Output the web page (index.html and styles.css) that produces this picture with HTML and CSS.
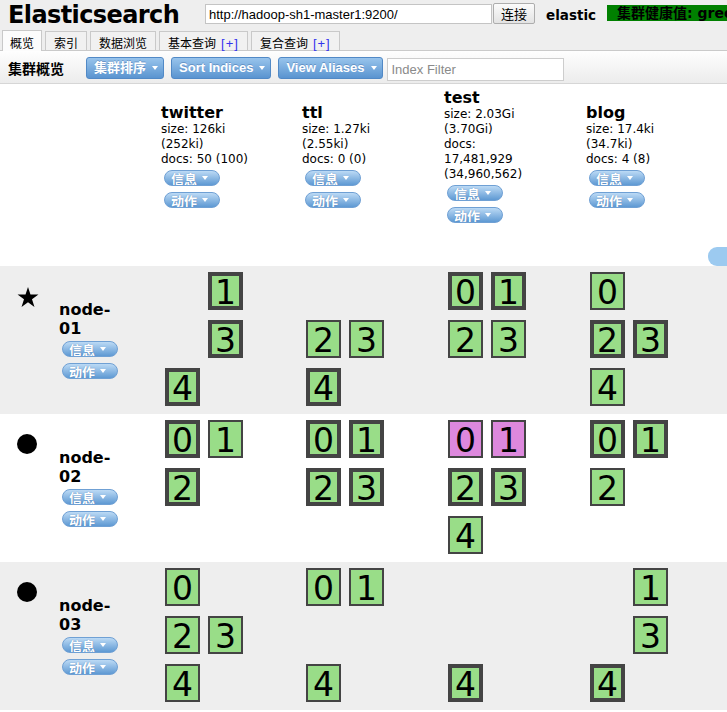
FILE: index.html
```html
<!DOCTYPE html>
<html lang="zh">
<head>
<meta charset="utf-8">
<title>Elasticsearch</title>
<link rel="stylesheet" href="styles.css">
</head>
<body>
<div class="page">
  <div class="top">
    <div class="header">
      <div class="title">Elasticsearch</div>
      <input class="url" type="text" value="http://hadoop-sh1-master1:9200/">
      <button class="connect">连接</button>
      <div class="cluster-name">elastic</div>
      <div class="health">集群健康值: green (40 of 40)</div>
    </div>
    <div class="tabs">
      <div class="tab active">概览</div>
      <div class="tab">索引</div>
      <div class="tab">数据浏览</div>
      <div class="tab">基本查询<span class="plus">[+]</span></div>
      <div class="tab">复合查询<span class="plus">[+]</span></div>
    </div>
  </div>
  <div class="toolbar">
    <div class="toolbar-title">集群概览</div>
    <div class="tbtn">集群排序<span class="caret"></span></div>
    <div class="tbtn">Sort Indices<span class="caret"></span></div>
    <div class="tbtn last">View Aliases<span class="caret"></span></div>
    <input class="filter" type="text" placeholder="Index Filter">
  </div>

  <div class="overview">
    <div class="grid-row head-row">
      <div></div>
      <div class="index-head">
        <div class="index-name">twitter</div>
        <div class="index-info">size: 126ki (252ki)<br>docs: 50 (100)</div>
        <div class="pills"><div class="pill"><span class="pill-text">信息</span><span class="caret"></span></div><div class="pill"><span class="pill-text">动作</span><span class="caret"></span></div></div>
      </div>
      <div class="index-head">
        <div class="index-name">ttl</div>
        <div class="index-info">size: 1.27ki (2.55ki)<br>docs: 0 (0)</div>
        <div class="pills"><div class="pill"><span class="pill-text">信息</span><span class="caret"></span></div><div class="pill"><span class="pill-text">动作</span><span class="caret"></span></div></div>
      </div>
      <div class="index-head">
        <div class="index-name">test</div>
        <div class="index-info">size: 2.03Gi (3.70Gi)<br>docs: 17,481,929 (34,960,562)</div>
        <div class="pills"><div class="pill"><span class="pill-text">信息</span><span class="caret"></span></div><div class="pill"><span class="pill-text">动作</span><span class="caret"></span></div></div>
      </div>
      <div class="index-head">
        <div class="index-name">blog</div>
        <div class="index-info">size: 17.4ki (34.7ki)<br>docs: 4 (8)</div>
        <div class="pills"><div class="pill"><span class="pill-text">信息</span><span class="caret"></span></div><div class="pill"><span class="pill-text">动作</span><span class="caret"></span></div></div>
      </div>
    </div>
    <div class="alias-row"><div class="alias"></div></div>

    <div class="grid-row node-row alt">
      <div class="node-cell">
        <div class="node-icon"><svg class="star" width="22" height="20" viewBox="0 0 22 20"><polygon points="11,0 13.47,7.6 21.46,7.6 15,12.3 17.47,19.9 11,15.2 4.53,19.9 7,12.3 0.54,7.6 8.53,7.6" fill="#000"/></svg></div>
        <div class="node-info">
          <div class="node-name">node-<wbr>01</div>
          <div class="pills"><div class="pill"><span class="pill-text">信息</span><span class="caret"></span></div><div class="pill"><span class="pill-text">动作</span><span class="caret"></span></div></div>
        </div>
      </div>
      <div class="shards"><div class="shard s1">1</div><div class="shard s3">3</div><div class="shard s4">4</div></div>
      <div class="shards"><div class="shard replica s2">2</div><div class="shard replica s3">3</div><div class="shard s4">4</div></div>
      <div class="shards"><div class="shard s0">0</div><div class="shard s1">1</div><div class="shard replica s2">2</div><div class="shard replica s3">3</div></div>
      <div class="shards"><div class="shard replica s0">0</div><div class="shard s2">2</div><div class="shard s3">3</div><div class="shard replica s4">4</div></div>
    </div>

    <div class="grid-row node-row">
      <div class="node-cell">
        <div class="node-icon"><div class="dot"></div></div>
        <div class="node-info">
          <div class="node-name">node-<wbr>02</div>
          <div class="pills"><div class="pill"><span class="pill-text">信息</span><span class="caret"></span></div><div class="pill"><span class="pill-text">动作</span><span class="caret"></span></div></div>
        </div>
      </div>
      <div class="shards"><div class="shard s0">0</div><div class="shard replica s1">1</div><div class="shard s2">2</div></div>
      <div class="shards"><div class="shard s0">0</div><div class="shard s1">1</div><div class="shard s2">2</div><div class="shard s3">3</div></div>
      <div class="shards"><div class="shard replica pink s0">0</div><div class="shard replica pink s1">1</div><div class="shard s2">2</div><div class="shard s3">3</div><div class="shard replica s4">4</div></div>
      <div class="shards"><div class="shard s0">0</div><div class="shard s1">1</div><div class="shard replica s2">2</div></div>
    </div>

    <div class="grid-row node-row alt">
      <div class="node-cell">
        <div class="node-icon"><div class="dot"></div></div>
        <div class="node-info">
          <div class="node-name">node-<wbr>03</div>
          <div class="pills"><div class="pill"><span class="pill-text">信息</span><span class="caret"></span></div><div class="pill"><span class="pill-text">动作</span><span class="caret"></span></div></div>
        </div>
      </div>
      <div class="shards"><div class="shard replica s0">0</div><div class="shard replica s2">2</div><div class="shard replica s3">3</div><div class="shard replica s4">4</div></div>
      <div class="shards"><div class="shard replica s0">0</div><div class="shard replica s1">1</div><div class="shard replica s4">4</div></div>
      <div class="shards"><div class="shard s4">4</div></div>
      <div class="shards"><div class="shard replica s1">1</div><div class="shard replica s3">3</div><div class="shard s4">4</div></div>
    </div>
  </div>
</div>
</body>
</html>
```

FILE: styles.css
```css
html, body {
  margin: 0;
  padding: 0;
  background: #fff;
  overflow: hidden;
}
body {
  font-family: "DejaVu Sans", "Noto Sans CJK SC", sans-serif;
  color: #000;
}
.page {
  width: 900px;
}

/* ---------- top header ---------- */
.top {
  background: #eee;
}
.header {
  display: flex;
  align-items: flex-start;
  height: 30px;
  white-space: nowrap;
}
.header > * {
  flex-shrink: 0;
}
.title {
  margin-left: 8px;
  width: 197px;
  font: bold 24px/30px "DejaVu Sans", sans-serif;
  letter-spacing: -0.6px;
}
.url {
  margin: 4px 0 0 0;
  width: 287px;
  height: 20px;
  box-sizing: border-box;
  border: 1px solid #c4c4c4;
  padding: 0 3px;
  font: 13px "Liberation Sans", sans-serif;
  color: #000;
  background: #fff;
  outline: none;
}
.connect {
  margin: 3px 0 0 1px;
  width: 42px;
  height: 21px;
  box-sizing: border-box;
  border: 1px solid #adadad;
  border-radius: 2px;
  background: linear-gradient(#fbfbfb, #e3e3e3);
  padding: 0;
  font: 13px/19px "Noto Sans CJK SC", sans-serif;
  color: #000;
}
.cluster-name {
  margin-left: 11px;
  font: bold 13.5px/30px "DejaVu Sans", sans-serif;
}
.health {
  margin: 5px 0 0 11px;
  height: 16px;
  padding: 0 10px;
  background: #008000;
  color: #000;
  font: bold 14px/16px "DejaVu Sans", "Noto Sans CJK SC", sans-serif;
}

/* ---------- tabs ---------- */
.tabs {
  display: flex;
  align-items: flex-end;
  gap: 3px;
  height: 21px;
  padding-left: 2px;
  margin-bottom: -1px;
  position: relative;
  z-index: 1;
}
.tab {
  height: 19px;
  margin-bottom: 1px;
  box-sizing: border-box;
  border: 1px solid #c9c9c9;
  border-bottom: 0;
  background: #f1f1f1;
  padding: 3px 8px 0;
  font: 12px/16px "Noto Sans CJK SC", sans-serif;
  white-space: nowrap;
}
.tab.active {
  height: 21px;
  margin-bottom: 0;
  padding: 4px 7px 0;
  background: #fcfcfc;
}
.plus {
  margin-left: 5px;
  color: #3333ee;
  font: 13px/16px "Liberation Sans", sans-serif;
  letter-spacing: 1px;
}

/* ---------- toolbar ---------- */
.toolbar {
  display: flex;
  align-items: flex-start;
  height: 22px;
  padding: 6px 0 4px 8px;
  border-top: 1px solid #cacaca;
  border-bottom: 1px solid #d6d6d6;
  background: linear-gradient(#fefefe, #ececec);
}
.toolbar-title {
  width: 78px;
  font: bold 14px/22px "Noto Sans CJK SC", sans-serif;
}
.tbtn {
  display: flex;
  align-items: center;
  gap: 6px;
  height: 22px;
  box-sizing: border-box;
  margin-right: 7px;
  padding: 0 5px 0 7px;
  border: 1px solid #5189c6;
  border-radius: 3px;
  background: linear-gradient(#98c4ec, #5a94d0);
  color: #fff;
  font: bold 13px/20px "Liberation Sans", "Noto Sans CJK SC", sans-serif;
  text-shadow: 0 -1px 0 rgba(40, 80, 140, 0.35);
  white-space: nowrap;
}
.tbtn.last {
  margin-right: 4px;
}
.caret {
  flex-shrink: 0;
  width: 0;
  height: 0;
  border-left: 3.5px solid transparent;
  border-right: 3.5px solid transparent;
  border-top: 4px solid #fff;
}
.filter {
  margin: 1px 0 0 0;
  width: 177px;
  height: 23px;
  box-sizing: border-box;
  border: 1px solid #cdcdcd;
  padding: 0 4px;
  font: 13px "Liberation Sans", sans-serif;
  background: #fff;
  outline: none;
}
.filter::placeholder {
  color: #8a8a8a;
}

/* ---------- overview ---------- */
.grid-row {
  display: grid;
  grid-template-columns: 161px 141px 142px 142px 142px;
}
.head-row {
  height: 142px;
  align-items: center;
  background: #fff;
}
.index-name {
  font: bold 16px/19px "DejaVu Sans", sans-serif;
}
.index-info {
  width: 100px;
  font: 12px/15px "DejaVu Sans", sans-serif;
}
.pills {
  display: flex;
  flex-direction: column;
  align-items: flex-start;
  gap: 6px;
  margin: 3px 0 0 3px;
}
.pill {
  display: flex;
  align-items: flex-start;
  gap: 5px;
  width: 56px;
  height: 16px;
  box-sizing: border-box;
  padding: 0 7px 0 6px;
  border: 1px solid #6fa0d4;
  border-radius: 8px;
  background: linear-gradient(#bcdaf5, #5e99d3);
  overflow: hidden;
  color: #fff;
}
.pill-text {
  flex-shrink: 0;
  margin-top: -1px;
  font: bold 13px/17px "Noto Sans CJK SC", sans-serif;
  text-shadow: 0 0 1px rgba(40, 80, 140, 0.6);
}
.pill .caret {
  margin-top: 5px;
}
.alias-row {
  display: flex;
  align-items: flex-end;
  height: 40px;
  padding-left: 708px;
  background: #fff;
}
.alias {
  width: 40px;
  height: 19px;
  border-radius: 9px;
  background: #9ccaf0;
}

/* ---------- node rows ---------- */
.node-row {
  height: 148px;
  background: #fff;
}
.node-row.alt {
  background: #eee;
}
.node-cell {
  display: flex;
  align-items: flex-start;
  padding-left: 17px;
}
.node-icon {
  width: 22px;
  height: 20px;
  margin-top: 20px;
}
.star {
  display: block;
  margin-top: 1px;
}
.dot {
  width: 20px;
  height: 20px;
  border-radius: 50%;
  background: #000;
}
.node-info {
  width: 58px;
  margin: 34px 0 0 20px;
}
.node-name {
  font: bold 16px/19px "DejaVu Sans", sans-serif;
  overflow-wrap: anywhere;
}

.shards {
  display: grid;
  grid-template-columns: 35px 35px;
  grid-template-rows: 38px 38px 38px;
  column-gap: 8px;
  row-gap: 10px;
  align-content: start;
  justify-content: start;
  padding: 6px 0 0 4px;
}
.shard {
  box-sizing: border-box;
  width: 35px;
  height: 38px;
  border: 4px solid #444;
  background: #99dd88;
  text-align: center;
  font: 33px/34px "DejaVu Sans", sans-serif;
  color: #000;
}
.shard.replica {
  border-width: 2px;
  padding-top: 2px;
}
.shard.pink {
  background: #dd88dd;
}
.s0 { grid-area: 1 / 1; }
.s1 { grid-area: 1 / 2; }
.s2 { grid-area: 2 / 1; }
.s3 { grid-area: 2 / 2; }
.s4 { grid-area: 3 / 1; }
```
